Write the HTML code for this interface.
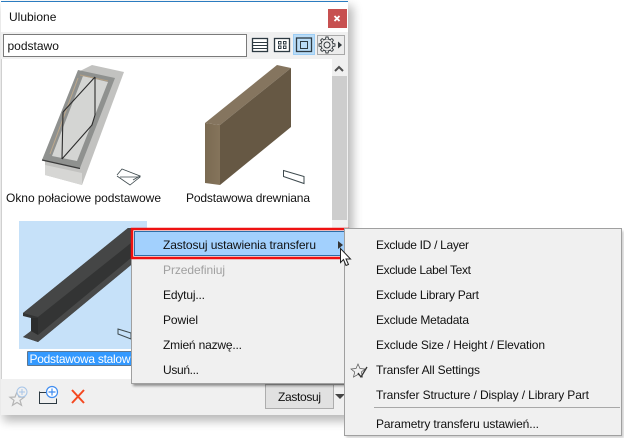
<!DOCTYPE html>
<html><head><meta charset="utf-8">
<style>
html,body{margin:0;padding:0;background:#fff;width:624px;height:438px;overflow:hidden}
svg{display:block}
text{font-family:"Liberation Sans",sans-serif;font-size:12px;fill:#111}
</style></head><body>
<svg width="624" height="438" viewBox="0 0 624 438" xmlns="http://www.w3.org/2000/svg">
<defs>
<filter id="s" x="-10%" y="-10%" width="125%" height="125%"><feGaussianBlur stdDeviation="5"/></filter>
<filter id="s2" x="-10%" y="-10%" width="125%" height="125%"><feGaussianBlur stdDeviation="1.2"/></filter>
<linearGradient id="wf" x1="0" x2="1" y1="0" y2="0"><stop offset="0" stop-color="#7a6a52"/><stop offset="1" stop-color="#85745b"/></linearGradient>
</defs>
<rect x="0" y="0" width="624" height="438" fill="#fff"/>
<rect x="3" y="6" width="350" height="415" fill="#000" opacity=".28" filter="url(#s)"/>
<!-- window -->
<rect x="1" y="1" width="347" height="414" fill="#fff"/>
<rect x="1" y="1" width="347" height="1" fill="#2b7cc0"/>
<rect x="1" y="32" width="347" height="27" fill="#f0f0f0"/>
<rect x="1" y="59" width="1" height="320" fill="#d0d0d0"/>
<text x="9" y="21">Ulubione</text>
<rect x="328" y="9" width="19" height="19" fill="#c75050"/>
<path d="M334.500 16l5 5M339.500 16l-5 5" stroke="#fff" stroke-width="1.800"/>
<!-- search -->
<rect x="3.500" y="34.500" width="243" height="22" fill="#fff" stroke="#7a7a7a"/>
<text x="7.500" y="50">podstawo</text>
<!-- toolbar icons -->
<rect x="252.500" y="38.500" width="15" height="13" fill="#fff" stroke="#2d3a42" stroke-width="1.300"/>
<path d="M253 42.500h14M253 45.500h14M253 48.500h14" stroke="#2d3a42"/>
<rect x="274.500" y="38.500" width="15" height="13" fill="#fff" stroke="#2d3a42" stroke-width="1.300"/>
<path d="M278.500 41.500h2.500v2.500h-2.500zM283.500 41.500h2.500v2.500h-2.500zM278.500 46h2.500v2.500h-2.500zM283.500 46h2.500v2.500h-2.500z" fill="none" stroke="#2d3a42"/>
<rect x="293.500" y="34.500" width="21" height="20" fill="#b9dcf7" stroke="#9ccdf5"/>
<rect x="296.500" y="38" width="15" height="13.500" fill="#b9dcf7" stroke="#2d3a42" stroke-width="1.300"/>
<rect x="300.500" y="41.500" width="7" height="7" fill="none" stroke="#2d3a42"/>
<rect x="317.500" y="35.500" width="27" height="19" fill="#ececec" stroke="#a8a8a8"/>
<circle cx="327" cy="45" r="6" fill="none" stroke="#33393d"/>
<g fill="#ececec" stroke="#33393d" stroke-width=".9">
<path d="M332.800 43.500L335 43.900V46.100L332.800 46.500"/>
<path transform="rotate(45 327 45)" d="M332.800 43.500L335 43.900V46.100L332.800 46.500"/>
<path transform="rotate(90 327 45)" d="M332.800 43.500L335 43.900V46.100L332.800 46.500"/>
<path transform="rotate(135 327 45)" d="M332.800 43.500L335 43.900V46.100L332.800 46.500"/>
<path transform="rotate(180 327 45)" d="M332.800 43.500L335 43.900V46.100L332.800 46.500"/>
<path transform="rotate(225 327 45)" d="M332.800 43.500L335 43.900V46.100L332.800 46.500"/>
<path transform="rotate(270 327 45)" d="M332.800 43.500L335 43.900V46.100L332.800 46.500"/>
<path transform="rotate(315 327 45)" d="M332.800 43.500L335 43.900V46.100L332.800 46.500"/>
</g>
<circle cx="327" cy="45" r="3" fill="none" stroke="#33393d"/>
<path d="M338 41.500l4 3.500-4 3.500z" fill="#33393d"/>
<!-- scrollbar -->
<rect x="332" y="59" width="16" height="320" fill="#f0f0f0"/>
<path d="M335 71l4-4 4 4" fill="none" stroke="#505050" stroke-width="2"/>
<rect x="332" y="76" width="15" height="144" fill="#cdcdcd"/>
<!-- window thumbnail -->
<path d="M92 65l32 7-42 113-37-10v-15l33-88z" fill="#c2c2c0"/>
<path d="M45 165l37 8v12l-37-10z" fill="#d6d6d4"/>
<path d="M78 70l37 8-35 90-38-8z" fill="#8f918f"/>
<path d="M83 76l25 6-31 79-25-5z" fill="#d4d5d3"/>
<path d="M80 75l28 6" stroke="#b39f83" stroke-width="1" fill="none"/>
<path d="M78 78l-28 76" stroke="#bda88c" stroke-width="1" fill="none"/>
<path d="M42 160l38 8.500" stroke="#3a3a3a" stroke-width="1.300" fill="none"/>
<path d="M95 77L63 112M63 112l-1 47M62 159L92 125L95 115M95 115V77" stroke="#2c2c2c" stroke-width="1.100" fill="none"/>
<path d="M117 175l5-6 18 7-7 4M120 177l20 0-10 8-13-9" fill="none" stroke="#3e4a4e" stroke-width=".8"/>
<text x="6" y="202" textLength="155" lengthAdjust="spacing">Okno połaciowe podstawowe</text>
<!-- wall thumbnail -->
<path d="M205 123l72-58 14 3-71 57z" fill="#85755f"/>
<path d="M220 125l71-57v59l-71 58z" fill="#665844"/>
<path d="M205 123l15 2v60l-15-2z" fill="url(#wf)"/>
<path d="M283.500 170.500l20.500 6v7l-20.500-7z" fill="none" stroke="#3e4a4e"/>
<text x="186" y="202" textLength="124" lengthAdjust="spacing">Podstawowa drewniana</text>
<!-- selected beam -->
<rect x="19" y="221" width="128" height="128" fill="#c6e1f9"/>
<path d="M23 313L128 228h3v37L38 342l-15-5 8-6V318l-8-2z" fill="#333434"/>
<path d="M23 313L128 228h3v15L38 317z" fill="#454646"/>
<path d="M31 318l7 0v24l-7-9z" fill="#2c2d2d"/>
<path d="M38 335l93-77v7L38 342l-15-5 8-6z" fill="#484949"/>
<path d="M118 329l13 4v6l-13-5z" fill="none" stroke="#3e4a4e"/>
<rect x="27.500" y="351.500" width="105" height="14" fill="#3399ff" stroke="#222" stroke-dasharray="1 1"/>
<text x="29.500" y="363" style="fill:#fff" textLength="101" lengthAdjust="spacing">Podstawowa stalow</text>
<!-- bottom bar -->
<rect x="1" y="379" width="347" height="36" fill="#f0f0f0"/>
<path d="M17 392l2 5 5 .3-4 3 1.500 5-4.500-2.800-4.500 2.800 1.500-5-4-3 5-.3z" fill="none" stroke="#b5b5b5" stroke-width="1.200"/>
<circle cx="22" cy="392" r="5" fill="#f0f0f0" stroke="#a7c5e8"/>
<path d="M19 392h6M22 389v6" stroke="#a7c5e8"/>
<path d="M39.500 391.500v12h17v-5" fill="none" stroke="#2d3a42"/>
<path d="M39.500 392.500h8" stroke="#2d3a42"/>
<circle cx="52" cy="392" r="5.500" fill="#fff" stroke="#3f8cf0" stroke-width="1.200"/>
<path d="M48.500 392h7M52 388.500v7" stroke="#3f8cf0" stroke-width="1.200"/>
<path d="M72 390l12 13M84 390l-12 13" stroke="#f4481f" stroke-width="2"/>
<rect x="265.500" y="384.500" width="68" height="24" fill="#e1e1e1" stroke="#adadad"/>
<rect x="266" y="384" width="78" height="1" fill="#adadad"/>
<text x="278" y="401" textLength="43" lengthAdjust="spacing">Zastosuj</text>
<path d="M335 394h10l-5 5z" fill="#444"/>
<!-- menu 1 -->
<rect x="133" y="231" width="214" height="155" fill="#000" opacity=".4" filter="url(#s2)"/>
<rect x="131.500" y="228.500" width="213" height="155" fill="#f0f0f0" stroke="#a0a0a0"/>
<rect x="134.500" y="231.500" width="210" height="24" fill="#a2d0fd" stroke="#2d6ea8"/>
<rect x="132" y="229" width="216" height="29" fill="none" stroke="#ee1111" stroke-width="2.500"/>
<text x="163" y="249" textLength="153" lengthAdjust="spacing">Zastosuj ustawienia transferu</text>
<path d="M338 241l5 4-5 4z" fill="#333"/>
<text x="163" y="274" style="fill:#a0a0a0" textLength="62" lengthAdjust="spacing">Przedefiniuj</text>
<text x="163" y="299" textLength="42" lengthAdjust="spacing">Edytuj...</text>
<text x="163" y="324" textLength="35" lengthAdjust="spacing">Powiel</text>
<text x="163" y="349" textLength="79" lengthAdjust="spacing">Zmień nazwę...</text>
<text x="163" y="374" textLength="36" lengthAdjust="spacing">Usuń...</text>
<!-- submenu -->
<rect x="346" y="231" width="278" height="207" fill="#000" opacity=".18" filter="url(#s2)"/>
<rect x="344.500" y="228.500" width="277" height="207" fill="#f0f0f0" stroke="#a0a0a0"/>
<text x="376" y="249" textLength="93" lengthAdjust="spacing">Exclude ID / Layer</text>
<text x="376" y="274" textLength="95" lengthAdjust="spacing">Exclude Label Text</text>
<text x="376" y="299" textLength="103" lengthAdjust="spacing">Exclude Library Part</text>
<text x="376" y="324" textLength="93" lengthAdjust="spacing">Exclude Metadata</text>
<text x="376" y="349" textLength="169" lengthAdjust="spacing">Exclude Size / Height / Elevation</text>
<text x="376" y="374" textLength="104" lengthAdjust="spacing">Transfer All Settings</text>
<text x="376" y="399" textLength="213" lengthAdjust="spacing">Transfer Structure / Display / Library Part</text>
<rect x="374" y="407" width="246" height="1" fill="#a8a8a8"/>
<text x="376" y="428" textLength="163" lengthAdjust="spacing">Parametry transferu ustawień...</text>
<path d="M358 364l2 4.500 5 .5-3.700 3 1.200 5-4.500-2.600-4.500 2.600 1.200-5-3.700-3 5-.5z" fill="none" stroke="#555" stroke-width=".7"/>
<path d="M358 373l3 4 6-10" fill="none" stroke="#333" stroke-width="1.300"/>
<!-- cursor -->
<path d="M340.500 248.500v14l3-3 2.500 6 2.500-1-2.500-5.500h4.500z" fill="#fff" stroke="#222" stroke-width="1"/>
</svg>
</body></html>
